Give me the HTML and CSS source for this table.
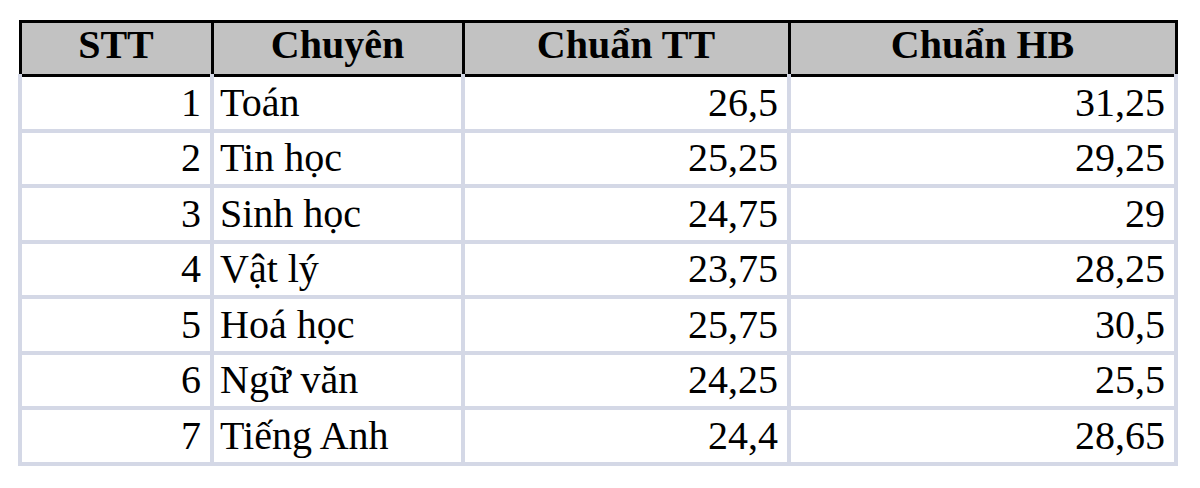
FILE: index.html
```html
<!DOCTYPE html>
<html lang="vi">
<head>
<meta charset="utf-8">
<title>Điểm chuẩn</title>
<link rel="stylesheet" href="styles.css">
</head>
<body>
<table class="scores">
  <colgroup>
    <col class="c-stt">
    <col class="c-name">
    <col class="c-tt">
    <col class="c-hb">
  </colgroup>
  <thead>
    <tr>
      <th>STT</th>
      <th>Chuyên</th>
      <th>Chuẩn TT</th>
      <th>Chuẩn HB</th>
    </tr>
  </thead>
  <tbody>
    <tr><td class="num">1</td><td class="txt">Toán</td><td class="num">26,5</td><td class="num">31,25</td></tr>
    <tr><td class="num">2</td><td class="txt">Tin học</td><td class="num">25,25</td><td class="num">29,25</td></tr>
    <tr><td class="num">3</td><td class="txt">Sinh học</td><td class="num">24,75</td><td class="num">29</td></tr>
    <tr><td class="num">4</td><td class="txt">Vật lý</td><td class="num">23,75</td><td class="num">28,25</td></tr>
    <tr><td class="num">5</td><td class="txt">Hoá học</td><td class="num">25,75</td><td class="num">30,5</td></tr>
    <tr><td class="num">6</td><td class="txt">Ngữ văn</td><td class="num">24,25</td><td class="num">25,5</td></tr>
    <tr><td class="num">7</td><td class="txt">Tiếng Anh</td><td class="num">24,4</td><td class="num">28,65</td></tr>
  </tbody>
</table>
</body>
</html>
```
FILE: styles.css
```css
html, body {
  margin: 0;
  padding: 0;
  background: #ffffff;
}

body {
  padding: 20px 0 0 18px;
  font-family: "Liberation Serif", "Times New Roman", serif;
  color: #000;
}

.scores {
  border-collapse: collapse;
  table-layout: fixed;
  width: 1156px;
}

.c-stt { width: 192px; }
.c-name { width: 251px; }
.c-tt { width: 326px; }
.c-hb { width: 387px; }

.scores th {
  background: #c2c2c2;
  border: 3px solid #000;
  font-size: 40px;
  font-weight: bold;
  text-align: center;
  height: 44px;
  padding: 0 0 7px 0;
  line-height: 44px;
  vertical-align: middle;
}

.scores td {
  border: 4px solid #d4d8e6;
  border-top: none;
  font-size: 40px;
  height: 51.5px;
  padding: 0;
  line-height: 44px;
  vertical-align: middle;
}

.scores td.num {
  text-align: right;
  padding-right: 9px;
}

.scores td.txt {
  text-align: left;
  padding-left: 6px;
}
```
